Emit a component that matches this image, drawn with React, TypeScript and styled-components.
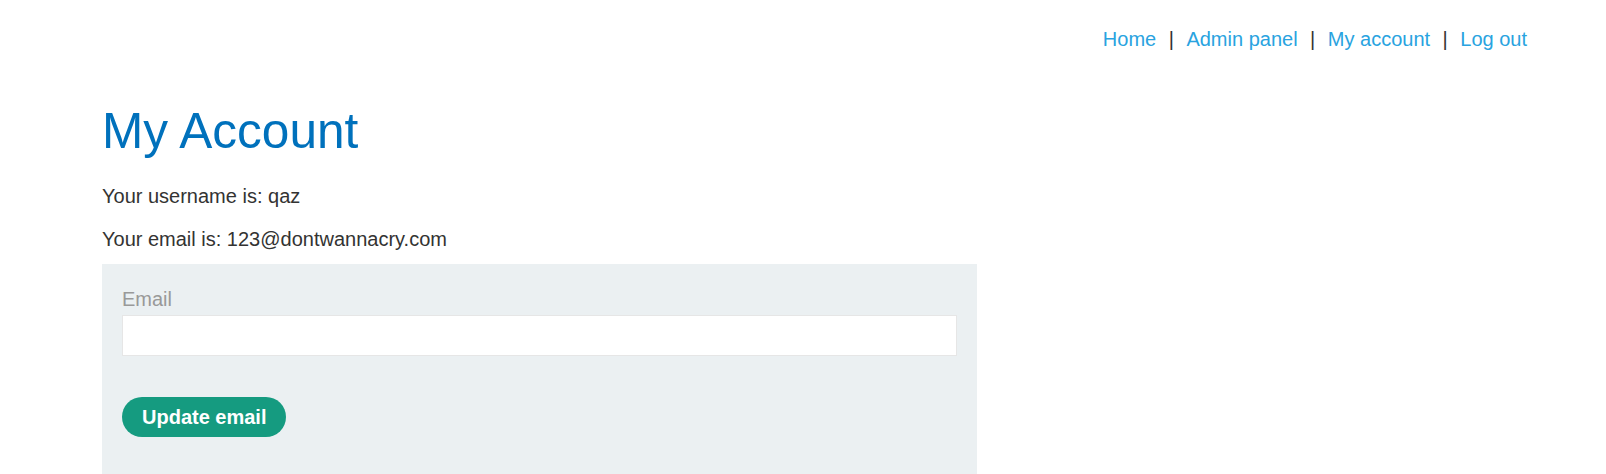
import React from "react";
import styled, { createGlobalStyle } from "styled-components";

const GlobalStyle = createGlobalStyle`
  html, body {
    margin: 0;
    padding: 0;
    background: #ffffff;
  }
  body {
    font-family: "Liberation Sans", Arial, sans-serif;
    font-size: 20px;
    color: #333332;
  }
`;

const Header = styled.nav`
  display: flex;
  justify-content: flex-end;
  align-items: center;
  padding: 28px 79px 0 0;
  line-height: 23px;
`;

const NavLink = styled.a`
  color: #29a3e0;
  text-decoration: none;
`;

const Separator = styled.span`
  margin: 0 12.5px;
  color: #333332;
`;

const Main = styled.main`
  padding: 0 0 0 102px;
`;

const Title = styled.h1`
  margin: 50px 0 0;
  font-size: 49.6px;
  font-weight: normal;
  line-height: 60px;
  color: #0071bc;
`;

const Info = styled.p<{ $top: number }>`
  margin: ${(p) => p.$top}px 0 0;
  line-height: 23px;
`;

const Panel = styled.form`
  width: 875px;
  box-sizing: border-box;
  margin-top: 13px;
  padding: 24px 20px 40px;
  background: #ebf0f2;
  display: flex;
  flex-direction: column;
  align-items: flex-start;
`;

const Label = styled.label`
  color: #999999;
  line-height: 23px;
`;

const Input = styled.input`
  box-sizing: border-box;
  width: 100%;
  height: 41px;
  margin: 4px 0 41px;
  border: 1px solid #e6e6e6;
  background: #ffffff;
  font: inherit;
  outline: none;
`;

const Button = styled.button`
  height: 40px;
  padding: 0 20px;
  border: none;
  border-radius: 20px;
  background: #159b80;
  color: #ffffff;
  font-family: "Liberation Sans", Arial, sans-serif;
  font-size: 20px;
  font-weight: bold;
  cursor: pointer;
`;

const links = ["Home", "Admin panel", "My account", "Log out"];

export default function App() {
  return (
    <>
      <GlobalStyle />
      <Header>
        {links.map((label, i) => (
          <React.Fragment key={label}>
            {i > 0 && <Separator>|</Separator>}
            <NavLink href="#">{label}</NavLink>
          </React.Fragment>
        ))}
      </Header>
      <Main>
        <Title>My Account</Title>
        <Info $top={24}>Your username is: qaz</Info>
        <Info $top={20}>Your email is: 123@dontwannacry.com</Info>
        <Panel onSubmit={(e) => e.preventDefault()}>
          <Label htmlFor="email">Email</Label>
          <Input id="email" type="email" name="email" />
          <Button type="submit">Update email</Button>
        </Panel>
      </Main>
    </>
  );
}
